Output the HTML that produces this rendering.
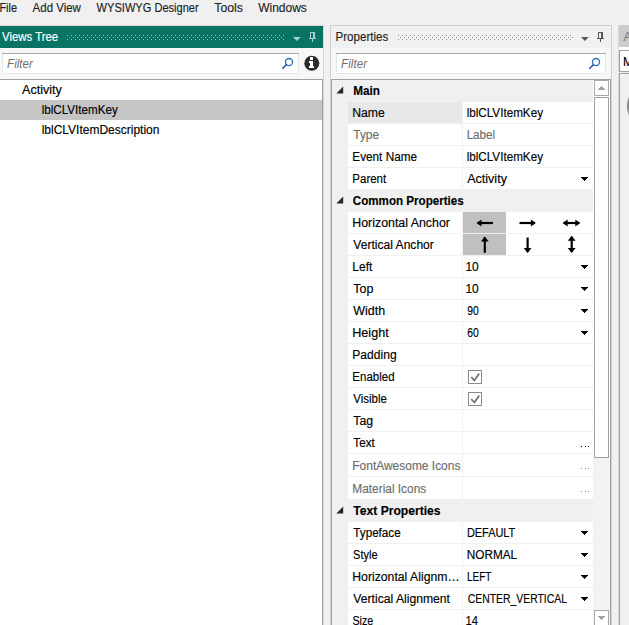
<!DOCTYPE html>
<html><head><meta charset="utf-8"><style>
html,body{margin:0;padding:0;width:629px;height:625px;overflow:hidden;background:#f0f0f0}
svg{display:block}
text{font-family:"Liberation Sans",sans-serif;font-size:12px;stroke:currentColor;stroke-width:0.15px}
</style></head><body>
<svg width="629" height="625" viewBox="0 0 629 625" shape-rendering="crispEdges">
<rect x="0" y="0" width="629" height="625" fill="#f0f0f0"/>
<rect x="0" y="0" width="629" height="26" fill="#f0f0f0"/>
<rect x="0" y="25" width="324" height="600" fill="#d6d6d6"/>
<rect x="0" y="26" width="323" height="22" fill="#0a7464"/>
<path d="M69 35h1v1h-1zM73 35h1v1h-1zM77 35h1v1h-1zM81 35h1v1h-1zM85 35h1v1h-1zM89 35h1v1h-1zM93 35h1v1h-1zM97 35h1v1h-1zM101 35h1v1h-1zM105 35h1v1h-1zM109 35h1v1h-1zM113 35h1v1h-1zM117 35h1v1h-1zM121 35h1v1h-1zM125 35h1v1h-1zM129 35h1v1h-1zM133 35h1v1h-1zM137 35h1v1h-1zM141 35h1v1h-1zM145 35h1v1h-1zM149 35h1v1h-1zM153 35h1v1h-1zM157 35h1v1h-1zM161 35h1v1h-1zM165 35h1v1h-1zM169 35h1v1h-1zM173 35h1v1h-1zM177 35h1v1h-1zM181 35h1v1h-1zM185 35h1v1h-1zM189 35h1v1h-1zM193 35h1v1h-1zM197 35h1v1h-1zM201 35h1v1h-1zM205 35h1v1h-1zM209 35h1v1h-1zM213 35h1v1h-1zM217 35h1v1h-1zM221 35h1v1h-1zM225 35h1v1h-1zM229 35h1v1h-1zM233 35h1v1h-1zM237 35h1v1h-1zM241 35h1v1h-1zM245 35h1v1h-1zM249 35h1v1h-1zM253 35h1v1h-1zM257 35h1v1h-1zM261 35h1v1h-1zM265 35h1v1h-1zM269 35h1v1h-1zM273 35h1v1h-1zM277 35h1v1h-1zM281 35h1v1h-1zM285 35h1v1h-1zM67 37h1v1h-1zM71 37h1v1h-1zM75 37h1v1h-1zM79 37h1v1h-1zM83 37h1v1h-1zM87 37h1v1h-1zM91 37h1v1h-1zM95 37h1v1h-1zM99 37h1v1h-1zM103 37h1v1h-1zM107 37h1v1h-1zM111 37h1v1h-1zM115 37h1v1h-1zM119 37h1v1h-1zM123 37h1v1h-1zM127 37h1v1h-1zM131 37h1v1h-1zM135 37h1v1h-1zM139 37h1v1h-1zM143 37h1v1h-1zM147 37h1v1h-1zM151 37h1v1h-1zM155 37h1v1h-1zM159 37h1v1h-1zM163 37h1v1h-1zM167 37h1v1h-1zM171 37h1v1h-1zM175 37h1v1h-1zM179 37h1v1h-1zM183 37h1v1h-1zM187 37h1v1h-1zM191 37h1v1h-1zM195 37h1v1h-1zM199 37h1v1h-1zM203 37h1v1h-1zM207 37h1v1h-1zM211 37h1v1h-1zM215 37h1v1h-1zM219 37h1v1h-1zM223 37h1v1h-1zM227 37h1v1h-1zM231 37h1v1h-1zM235 37h1v1h-1zM239 37h1v1h-1zM243 37h1v1h-1zM247 37h1v1h-1zM251 37h1v1h-1zM255 37h1v1h-1zM259 37h1v1h-1zM263 37h1v1h-1zM267 37h1v1h-1zM271 37h1v1h-1zM275 37h1v1h-1zM279 37h1v1h-1zM283 37h1v1h-1zM69 39h1v1h-1zM73 39h1v1h-1zM77 39h1v1h-1zM81 39h1v1h-1zM85 39h1v1h-1zM89 39h1v1h-1zM93 39h1v1h-1zM97 39h1v1h-1zM101 39h1v1h-1zM105 39h1v1h-1zM109 39h1v1h-1zM113 39h1v1h-1zM117 39h1v1h-1zM121 39h1v1h-1zM125 39h1v1h-1zM129 39h1v1h-1zM133 39h1v1h-1zM137 39h1v1h-1zM141 39h1v1h-1zM145 39h1v1h-1zM149 39h1v1h-1zM153 39h1v1h-1zM157 39h1v1h-1zM161 39h1v1h-1zM165 39h1v1h-1zM169 39h1v1h-1zM173 39h1v1h-1zM177 39h1v1h-1zM181 39h1v1h-1zM185 39h1v1h-1zM189 39h1v1h-1zM193 39h1v1h-1zM197 39h1v1h-1zM201 39h1v1h-1zM205 39h1v1h-1zM209 39h1v1h-1zM213 39h1v1h-1zM217 39h1v1h-1zM221 39h1v1h-1zM225 39h1v1h-1zM229 39h1v1h-1zM233 39h1v1h-1zM237 39h1v1h-1zM241 39h1v1h-1zM245 39h1v1h-1zM249 39h1v1h-1zM253 39h1v1h-1zM257 39h1v1h-1zM261 39h1v1h-1zM265 39h1v1h-1zM269 39h1v1h-1zM273 39h1v1h-1zM277 39h1v1h-1zM281 39h1v1h-1zM285 39h1v1h-1z" fill="#076555"/>
<path d="M67 35h1v1h-1zM71 35h1v1h-1zM75 35h1v1h-1zM79 35h1v1h-1zM83 35h1v1h-1zM87 35h1v1h-1zM91 35h1v1h-1zM95 35h1v1h-1zM99 35h1v1h-1zM103 35h1v1h-1zM107 35h1v1h-1zM111 35h1v1h-1zM115 35h1v1h-1zM119 35h1v1h-1zM123 35h1v1h-1zM127 35h1v1h-1zM131 35h1v1h-1zM135 35h1v1h-1zM139 35h1v1h-1zM143 35h1v1h-1zM147 35h1v1h-1zM151 35h1v1h-1zM155 35h1v1h-1zM159 35h1v1h-1zM163 35h1v1h-1zM167 35h1v1h-1zM171 35h1v1h-1zM175 35h1v1h-1zM179 35h1v1h-1zM183 35h1v1h-1zM187 35h1v1h-1zM191 35h1v1h-1zM195 35h1v1h-1zM199 35h1v1h-1zM203 35h1v1h-1zM207 35h1v1h-1zM211 35h1v1h-1zM215 35h1v1h-1zM219 35h1v1h-1zM223 35h1v1h-1zM227 35h1v1h-1zM231 35h1v1h-1zM235 35h1v1h-1zM239 35h1v1h-1zM243 35h1v1h-1zM247 35h1v1h-1zM251 35h1v1h-1zM255 35h1v1h-1zM259 35h1v1h-1zM263 35h1v1h-1zM267 35h1v1h-1zM271 35h1v1h-1zM275 35h1v1h-1zM279 35h1v1h-1zM283 35h1v1h-1zM69 37h1v1h-1zM73 37h1v1h-1zM77 37h1v1h-1zM81 37h1v1h-1zM85 37h1v1h-1zM89 37h1v1h-1zM93 37h1v1h-1zM97 37h1v1h-1zM101 37h1v1h-1zM105 37h1v1h-1zM109 37h1v1h-1zM113 37h1v1h-1zM117 37h1v1h-1zM121 37h1v1h-1zM125 37h1v1h-1zM129 37h1v1h-1zM133 37h1v1h-1zM137 37h1v1h-1zM141 37h1v1h-1zM145 37h1v1h-1zM149 37h1v1h-1zM153 37h1v1h-1zM157 37h1v1h-1zM161 37h1v1h-1zM165 37h1v1h-1zM169 37h1v1h-1zM173 37h1v1h-1zM177 37h1v1h-1zM181 37h1v1h-1zM185 37h1v1h-1zM189 37h1v1h-1zM193 37h1v1h-1zM197 37h1v1h-1zM201 37h1v1h-1zM205 37h1v1h-1zM209 37h1v1h-1zM213 37h1v1h-1zM217 37h1v1h-1zM221 37h1v1h-1zM225 37h1v1h-1zM229 37h1v1h-1zM233 37h1v1h-1zM237 37h1v1h-1zM241 37h1v1h-1zM245 37h1v1h-1zM249 37h1v1h-1zM253 37h1v1h-1zM257 37h1v1h-1zM261 37h1v1h-1zM265 37h1v1h-1zM269 37h1v1h-1zM273 37h1v1h-1zM277 37h1v1h-1zM281 37h1v1h-1zM67 39h1v1h-1zM71 39h1v1h-1zM75 39h1v1h-1zM79 39h1v1h-1zM83 39h1v1h-1zM87 39h1v1h-1zM91 39h1v1h-1zM95 39h1v1h-1zM99 39h1v1h-1zM103 39h1v1h-1zM107 39h1v1h-1zM111 39h1v1h-1zM115 39h1v1h-1zM119 39h1v1h-1zM123 39h1v1h-1zM127 39h1v1h-1zM131 39h1v1h-1zM135 39h1v1h-1zM139 39h1v1h-1zM143 39h1v1h-1zM147 39h1v1h-1zM151 39h1v1h-1zM155 39h1v1h-1zM159 39h1v1h-1zM163 39h1v1h-1zM167 39h1v1h-1zM171 39h1v1h-1zM175 39h1v1h-1zM179 39h1v1h-1zM183 39h1v1h-1zM187 39h1v1h-1zM191 39h1v1h-1zM195 39h1v1h-1zM199 39h1v1h-1zM203 39h1v1h-1zM207 39h1v1h-1zM211 39h1v1h-1zM215 39h1v1h-1zM219 39h1v1h-1zM223 39h1v1h-1zM227 39h1v1h-1zM231 39h1v1h-1zM235 39h1v1h-1zM239 39h1v1h-1zM243 39h1v1h-1zM247 39h1v1h-1zM251 39h1v1h-1zM255 39h1v1h-1zM259 39h1v1h-1zM263 39h1v1h-1zM267 39h1v1h-1zM271 39h1v1h-1zM275 39h1v1h-1zM279 39h1v1h-1zM283 39h1v1h-1z" fill="#8cc4ba"/>
<path d="M293 37h7.8l-3.9 3.9z" fill="#a3d2ca" shape-rendering="geometricPrecision"/>
<path d="M310 32h5v6h1v1h-3v3h-1v-3h-3v-1h1zM311 33v5h2v-5z" fill="#a3d2ca" fill-rule="evenodd"/>
<rect x="0" y="48" width="323" height="31" fill="#f7f7f7"/>
<rect x="2" y="53" width="297" height="21" fill="#ffffff"/>
<rect x="2" y="53" width="297" height="1" fill="#a9a9a9"/>
<rect x="2" y="54" width="1" height="20" fill="#e2e8ef"/>
<rect x="298" y="54" width="1" height="20" fill="#e2e8ef"/>
<rect x="2" y="73" width="297" height="1" fill="#e2e8ef"/>
<g shape-rendering="geometricPrecision"><circle cx="289" cy="62" r="3.55" fill="none" stroke="#2e6fc0" stroke-width="1.35"/>
<path d="M286.3 64.7L282.8 68.2" stroke="#21509c" stroke-width="1.6" stroke-linecap="round"/></g>
<circle cx="311.8" cy="63.2" r="7.5" fill="#2b2b2b" shape-rendering="geometricPrecision"/>
<path d="M310 57h3v3h-3z M309 61h4v5h1v2h-5v-2h1v-3h-1z" fill="#ffffff"/>
<rect x="0" y="79" width="323" height="546" fill="#ffffff"/>
<rect x="0" y="79" width="323" height="1" fill="#a0a0a0"/>
<rect x="322" y="79" width="1" height="546" fill="#a0a0a0"/>
<rect x="0" y="100" width="322" height="20" fill="#c5c5c5"/>
<rect x="330" y="25" width="282" height="600" fill="#d0d0d0"/>
<rect x="331" y="26" width="280" height="22" fill="#f1f1f1"/>
<rect x="331" y="48" width="280" height="31" fill="#f7f7f7"/>
<path d="M400 35h1v1h-1zM404 35h1v1h-1zM408 35h1v1h-1zM412 35h1v1h-1zM416 35h1v1h-1zM420 35h1v1h-1zM424 35h1v1h-1zM428 35h1v1h-1zM432 35h1v1h-1zM436 35h1v1h-1zM440 35h1v1h-1zM444 35h1v1h-1zM448 35h1v1h-1zM452 35h1v1h-1zM456 35h1v1h-1zM460 35h1v1h-1zM464 35h1v1h-1zM468 35h1v1h-1zM472 35h1v1h-1zM476 35h1v1h-1zM480 35h1v1h-1zM484 35h1v1h-1zM488 35h1v1h-1zM492 35h1v1h-1zM496 35h1v1h-1zM500 35h1v1h-1zM504 35h1v1h-1zM508 35h1v1h-1zM512 35h1v1h-1zM516 35h1v1h-1zM520 35h1v1h-1zM524 35h1v1h-1zM528 35h1v1h-1zM532 35h1v1h-1zM536 35h1v1h-1zM540 35h1v1h-1zM544 35h1v1h-1zM548 35h1v1h-1zM552 35h1v1h-1zM556 35h1v1h-1zM560 35h1v1h-1zM564 35h1v1h-1zM568 35h1v1h-1zM572 35h1v1h-1zM398 37h1v1h-1zM402 37h1v1h-1zM406 37h1v1h-1zM410 37h1v1h-1zM414 37h1v1h-1zM418 37h1v1h-1zM422 37h1v1h-1zM426 37h1v1h-1zM430 37h1v1h-1zM434 37h1v1h-1zM438 37h1v1h-1zM442 37h1v1h-1zM446 37h1v1h-1zM450 37h1v1h-1zM454 37h1v1h-1zM458 37h1v1h-1zM462 37h1v1h-1zM466 37h1v1h-1zM470 37h1v1h-1zM474 37h1v1h-1zM478 37h1v1h-1zM482 37h1v1h-1zM486 37h1v1h-1zM490 37h1v1h-1zM494 37h1v1h-1zM498 37h1v1h-1zM502 37h1v1h-1zM506 37h1v1h-1zM510 37h1v1h-1zM514 37h1v1h-1zM518 37h1v1h-1zM522 37h1v1h-1zM526 37h1v1h-1zM530 37h1v1h-1zM534 37h1v1h-1zM538 37h1v1h-1zM542 37h1v1h-1zM546 37h1v1h-1zM550 37h1v1h-1zM554 37h1v1h-1zM558 37h1v1h-1zM562 37h1v1h-1zM566 37h1v1h-1zM570 37h1v1h-1zM574 37h1v1h-1zM400 39h1v1h-1zM404 39h1v1h-1zM408 39h1v1h-1zM412 39h1v1h-1zM416 39h1v1h-1zM420 39h1v1h-1zM424 39h1v1h-1zM428 39h1v1h-1zM432 39h1v1h-1zM436 39h1v1h-1zM440 39h1v1h-1zM444 39h1v1h-1zM448 39h1v1h-1zM452 39h1v1h-1zM456 39h1v1h-1zM460 39h1v1h-1zM464 39h1v1h-1zM468 39h1v1h-1zM472 39h1v1h-1zM476 39h1v1h-1zM480 39h1v1h-1zM484 39h1v1h-1zM488 39h1v1h-1zM492 39h1v1h-1zM496 39h1v1h-1zM500 39h1v1h-1zM504 39h1v1h-1zM508 39h1v1h-1zM512 39h1v1h-1zM516 39h1v1h-1zM520 39h1v1h-1zM524 39h1v1h-1zM528 39h1v1h-1zM532 39h1v1h-1zM536 39h1v1h-1zM540 39h1v1h-1zM544 39h1v1h-1zM548 39h1v1h-1zM552 39h1v1h-1zM556 39h1v1h-1zM560 39h1v1h-1zM564 39h1v1h-1zM568 39h1v1h-1zM572 39h1v1h-1z" fill="#ffffff"/>
<path d="M398 35h1v1h-1zM402 35h1v1h-1zM406 35h1v1h-1zM410 35h1v1h-1zM414 35h1v1h-1zM418 35h1v1h-1zM422 35h1v1h-1zM426 35h1v1h-1zM430 35h1v1h-1zM434 35h1v1h-1zM438 35h1v1h-1zM442 35h1v1h-1zM446 35h1v1h-1zM450 35h1v1h-1zM454 35h1v1h-1zM458 35h1v1h-1zM462 35h1v1h-1zM466 35h1v1h-1zM470 35h1v1h-1zM474 35h1v1h-1zM478 35h1v1h-1zM482 35h1v1h-1zM486 35h1v1h-1zM490 35h1v1h-1zM494 35h1v1h-1zM498 35h1v1h-1zM502 35h1v1h-1zM506 35h1v1h-1zM510 35h1v1h-1zM514 35h1v1h-1zM518 35h1v1h-1zM522 35h1v1h-1zM526 35h1v1h-1zM530 35h1v1h-1zM534 35h1v1h-1zM538 35h1v1h-1zM542 35h1v1h-1zM546 35h1v1h-1zM550 35h1v1h-1zM554 35h1v1h-1zM558 35h1v1h-1zM562 35h1v1h-1zM566 35h1v1h-1zM570 35h1v1h-1zM400 37h1v1h-1zM404 37h1v1h-1zM408 37h1v1h-1zM412 37h1v1h-1zM416 37h1v1h-1zM420 37h1v1h-1zM424 37h1v1h-1zM428 37h1v1h-1zM432 37h1v1h-1zM436 37h1v1h-1zM440 37h1v1h-1zM444 37h1v1h-1zM448 37h1v1h-1zM452 37h1v1h-1zM456 37h1v1h-1zM460 37h1v1h-1zM464 37h1v1h-1zM468 37h1v1h-1zM472 37h1v1h-1zM476 37h1v1h-1zM480 37h1v1h-1zM484 37h1v1h-1zM488 37h1v1h-1zM492 37h1v1h-1zM496 37h1v1h-1zM500 37h1v1h-1zM504 37h1v1h-1zM508 37h1v1h-1zM512 37h1v1h-1zM516 37h1v1h-1zM520 37h1v1h-1zM524 37h1v1h-1zM528 37h1v1h-1zM532 37h1v1h-1zM536 37h1v1h-1zM540 37h1v1h-1zM544 37h1v1h-1zM548 37h1v1h-1zM552 37h1v1h-1zM556 37h1v1h-1zM560 37h1v1h-1zM564 37h1v1h-1zM568 37h1v1h-1zM572 37h1v1h-1zM398 39h1v1h-1zM402 39h1v1h-1zM406 39h1v1h-1zM410 39h1v1h-1zM414 39h1v1h-1zM418 39h1v1h-1zM422 39h1v1h-1zM426 39h1v1h-1zM430 39h1v1h-1zM434 39h1v1h-1zM438 39h1v1h-1zM442 39h1v1h-1zM446 39h1v1h-1zM450 39h1v1h-1zM454 39h1v1h-1zM458 39h1v1h-1zM462 39h1v1h-1zM466 39h1v1h-1zM470 39h1v1h-1zM474 39h1v1h-1zM478 39h1v1h-1zM482 39h1v1h-1zM486 39h1v1h-1zM490 39h1v1h-1zM494 39h1v1h-1zM498 39h1v1h-1zM502 39h1v1h-1zM506 39h1v1h-1zM510 39h1v1h-1zM514 39h1v1h-1zM518 39h1v1h-1zM522 39h1v1h-1zM526 39h1v1h-1zM530 39h1v1h-1zM534 39h1v1h-1zM538 39h1v1h-1zM542 39h1v1h-1zM546 39h1v1h-1zM550 39h1v1h-1zM554 39h1v1h-1zM558 39h1v1h-1zM562 39h1v1h-1zM566 39h1v1h-1zM570 39h1v1h-1z" fill="#8f8f8f"/>
<path d="M581 37h7.8l-3.9 3.9z" fill="#5a5a5a" shape-rendering="geometricPrecision"/>
<path d="M598 32h5v6h1v1h-3v3h-1v-3h-3v-1h1zM599 33v5h2v-5z" fill="#555555" fill-rule="evenodd"/>
<rect x="336" y="53" width="270" height="21" fill="#ffffff"/>
<rect x="336" y="53" width="270" height="1" fill="#a9a9a9"/>
<rect x="336" y="54" width="1" height="20" fill="#e2e8ef"/>
<rect x="605" y="54" width="1" height="20" fill="#e2e8ef"/>
<rect x="336" y="73" width="270" height="1" fill="#e2e8ef"/>
<g shape-rendering="geometricPrecision"><circle cx="596" cy="62" r="3.55" fill="none" stroke="#2e6fc0" stroke-width="1.35"/>
<path d="M593.3 64.7L589.8 68.2" stroke="#21509c" stroke-width="1.6" stroke-linecap="round"/></g>
<rect x="331" y="79" width="280" height="546" fill="#a0a0a0"/>
<rect x="332" y="80" width="278" height="545" fill="#ffffff"/>
<rect x="332" y="80" width="16" height="545" fill="#f0f0f0"/>
<rect x="332" y="80" width="261" height="22" fill="#f0f0f0"/>
<rect x="462" y="102" width="1" height="21" fill="#f0f0f0"/>
<rect x="348" y="123" width="245" height="1" fill="#f0f0f0"/>
<rect x="462" y="124" width="1" height="21" fill="#f0f0f0"/>
<rect x="348" y="145" width="245" height="1" fill="#f0f0f0"/>
<rect x="462" y="146" width="1" height="21" fill="#f0f0f0"/>
<rect x="348" y="167" width="245" height="1" fill="#f0f0f0"/>
<rect x="462" y="168" width="1" height="21" fill="#f0f0f0"/>
<rect x="332" y="189" width="261" height="23" fill="#f0f0f0"/>
<rect x="462" y="212" width="1" height="21" fill="#f0f0f0"/>
<rect x="348" y="233" width="245" height="1" fill="#f0f0f0"/>
<rect x="462" y="234" width="1" height="21" fill="#f0f0f0"/>
<rect x="348" y="255" width="245" height="1" fill="#f0f0f0"/>
<rect x="462" y="256" width="1" height="21" fill="#f0f0f0"/>
<rect x="348" y="277" width="245" height="1" fill="#f0f0f0"/>
<rect x="462" y="278" width="1" height="21" fill="#f0f0f0"/>
<rect x="348" y="299" width="245" height="1" fill="#f0f0f0"/>
<rect x="462" y="300" width="1" height="21" fill="#f0f0f0"/>
<rect x="348" y="321" width="245" height="1" fill="#f0f0f0"/>
<rect x="462" y="322" width="1" height="21" fill="#f0f0f0"/>
<rect x="348" y="343" width="245" height="1" fill="#f0f0f0"/>
<rect x="462" y="344" width="1" height="21" fill="#f0f0f0"/>
<rect x="348" y="365" width="245" height="1" fill="#f0f0f0"/>
<rect x="462" y="366" width="1" height="21" fill="#f0f0f0"/>
<rect x="348" y="387" width="245" height="1" fill="#f0f0f0"/>
<rect x="462" y="388" width="1" height="21" fill="#f0f0f0"/>
<rect x="348" y="409" width="245" height="1" fill="#f0f0f0"/>
<rect x="462" y="410" width="1" height="21" fill="#f0f0f0"/>
<rect x="348" y="431" width="245" height="1" fill="#f0f0f0"/>
<rect x="462" y="432" width="1" height="21" fill="#f0f0f0"/>
<rect x="348" y="453" width="245" height="1" fill="#f0f0f0"/>
<rect x="462" y="454" width="1" height="22" fill="#f0f0f0"/>
<rect x="348" y="476" width="245" height="1" fill="#f0f0f0"/>
<rect x="462" y="477" width="1" height="22" fill="#f0f0f0"/>
<rect x="332" y="499" width="261" height="23" fill="#f0f0f0"/>
<rect x="462" y="522" width="1" height="21" fill="#f0f0f0"/>
<rect x="348" y="543" width="245" height="1" fill="#f0f0f0"/>
<rect x="462" y="544" width="1" height="21" fill="#f0f0f0"/>
<rect x="348" y="565" width="245" height="1" fill="#f0f0f0"/>
<rect x="462" y="566" width="1" height="21" fill="#f0f0f0"/>
<rect x="348" y="587" width="245" height="1" fill="#f0f0f0"/>
<rect x="462" y="588" width="1" height="21" fill="#f0f0f0"/>
<rect x="348" y="609" width="245" height="1" fill="#f0f0f0"/>
<rect x="462" y="610" width="1" height="21" fill="#f0f0f0"/>
<rect x="348" y="631" width="245" height="1" fill="#f0f0f0"/>
<rect x="348" y="102" width="114" height="21" fill="#e8e8e8"/>
<rect x="463" y="212" width="43" height="21" fill="#c0c0c0"/>
<rect x="463" y="234" width="43" height="21" fill="#c0c0c0"/>
<path d="M343.2 86.6v6.8h-6.8z" fill="#262626" shape-rendering="geometricPrecision"/>
<path d="M343.2 196.6v6.8h-6.8z" fill="#262626" shape-rendering="geometricPrecision"/>
<path d="M343.2 506.6v6.8h-6.8z" fill="#262626" shape-rendering="geometricPrecision"/>
<path d="M581 177h7l-3.5 4z" fill="#000"/>
<path d="M581 265h7l-3.5 4z" fill="#000"/>
<path d="M581 287h7l-3.5 4z" fill="#000"/>
<path d="M581 309h7l-3.5 4z" fill="#000"/>
<path d="M581 331h7l-3.5 4z" fill="#000"/>
<path d="M581 531h7l-3.5 4z" fill="#000"/>
<path d="M581 553h7l-3.5 4z" fill="#000"/>
<path d="M581 575h7l-3.5 4z" fill="#000"/>
<path d="M581 597h7l-3.5 4z" fill="#000"/>
<rect x="581" y="446" width="1" height="1" fill="#000"/>
<rect x="585" y="446" width="1" height="1" fill="#000"/>
<rect x="588" y="446" width="1" height="1" fill="#000"/>
<rect x="581" y="468" width="1" height="1" fill="#8a8a8a"/>
<rect x="585" y="468" width="1" height="1" fill="#8a8a8a"/>
<rect x="588" y="468" width="1" height="1" fill="#8a8a8a"/>
<rect x="581" y="491" width="1" height="1" fill="#8a8a8a"/>
<rect x="585" y="491" width="1" height="1" fill="#8a8a8a"/>
<rect x="588" y="491" width="1" height="1" fill="#8a8a8a"/>
<rect x="468.5" y="370.5" width="13" height="13" fill="#fff" stroke="#8a8a8a" stroke-width="1"/>
<path d="M471.3 377.2L474.4 380.5L479.2 373.4" fill="none" stroke="#6e6e6e" stroke-width="1.7" shape-rendering="geometricPrecision"/>
<rect x="468.5" y="392.5" width="13" height="13" fill="#fff" stroke="#8a8a8a" stroke-width="1"/>
<path d="M471.3 399.2L474.4 402.5L479.2 395.4" fill="none" stroke="#6e6e6e" stroke-width="1.7" shape-rendering="geometricPrecision"/>
<g shape-rendering="geometricPrecision"><path d="M477.5 223H493" stroke="#000" stroke-width="2.2"/>
<path d="M476.5 223l5 -3.6v7.2z" fill="#000"/>
</g>
<g shape-rendering="geometricPrecision"><path d="M519.5 223H534.8" stroke="#000" stroke-width="2.2"/>
<path d="M535.8 223l-5 -3.6v7.2z" fill="#000"/>
</g>
<g shape-rendering="geometricPrecision"><path d="M563.6 223H579.3" stroke="#000" stroke-width="2.2"/>
<path d="M562.6 223l5 -3.6v7.2z" fill="#000"/>
<path d="M580.3 223l-5 -3.6v7.2z" fill="#000"/>
</g>
<g shape-rendering="geometricPrecision"><path d="M484.8 237.5V252.8" stroke="#000" stroke-width="2.2"/>
<path d="M484.8 236.5l-3.9 5h7.8z" fill="#000"/>
</g>
<g shape-rendering="geometricPrecision"><path d="M527.6 237.5V252" stroke="#000" stroke-width="2.2"/>
<path d="M527.6 253l-3.9 -5h7.8z" fill="#000"/>
</g>
<g shape-rendering="geometricPrecision"><path d="M571.7 236.8V252" stroke="#000" stroke-width="2.2"/>
<path d="M571.7 235.8l-3.9 5h7.8z" fill="#000"/>
<path d="M571.7 253l-3.9 -5h7.8z" fill="#000"/>
</g>
<rect x="593" y="80" width="17" height="545" fill="#ffffff"/>
<rect x="593" y="458" width="17" height="167" fill="#f2f2f2"/>
<rect x="594.5" y="80.5" width="14" height="15" fill="#fff" stroke="#a8a8a8"/>
<path d="M598 90h7l-3.5 -4z" fill="#a0a0a0"/>
<rect x="594.5" y="97.5" width="14" height="360" fill="#fff" stroke="#a0a0a0"/>
<rect x="594.5" y="610.5" width="14" height="20" fill="#fff" stroke="#a8a8a8"/>
<path d="M598 616h7l-3.5 4z" fill="#a0a0a0"/>
<rect x="618" y="25" width="11" height="600" fill="#f0f0f0"/>
<rect x="618" y="25" width="1" height="600" fill="#d9d9d9"/>
<rect x="619" y="25" width="10" height="22" fill="#cccccc"/>
<rect x="619" y="47" width="10" height="3" fill="#ffffff"/>
<rect x="619" y="50" width="10" height="22" fill="#a0a0a0"/>
<rect x="620" y="51" width="9" height="20" fill="#ffffff"/>
<rect x="619" y="73" width="10" height="552" fill="#a0a0a0"/>
<rect x="620" y="74" width="9" height="551" fill="#f0f0f0"/>
<circle cx="649" cy="106" r="21" fill="none" stroke="#8c8c8c" stroke-width="2.2" shape-rendering="geometricPrecision"/>
<text x="623.6" y="41" font-family="Liberation Sans" font-size="12" fill="#808080" color="#808080">A</text>
<text x="623" y="66" font-family="Liberation Sans" font-size="12" fill="#000">M</text>
<text x="-0.61" y="12" textLength="17.62" lengthAdjust="spacingAndGlyphs" font-weight="normal" font-style="normal" fill="#1e1e1e" color="#1e1e1e">File</text>
<text x="32.60" y="12" textLength="48.31" lengthAdjust="spacingAndGlyphs" font-weight="normal" font-style="normal" fill="#1e1e1e" color="#1e1e1e">Add View</text>
<text x="96.60" y="12" textLength="102.13" lengthAdjust="spacingAndGlyphs" font-weight="normal" font-style="normal" fill="#1e1e1e" color="#1e1e1e">WYSIWYG Designer</text>
<text x="214.30" y="12" textLength="28.52" lengthAdjust="spacingAndGlyphs" font-weight="normal" font-style="normal" fill="#1e1e1e" color="#1e1e1e">Tools</text>
<text x="258.20" y="12" textLength="48.69" lengthAdjust="spacingAndGlyphs" font-weight="normal" font-style="normal" fill="#1e1e1e" color="#1e1e1e">Windows</text>
<text x="2.00" y="41" textLength="56.13" lengthAdjust="spacingAndGlyphs" font-weight="normal" font-style="normal" fill="#ffffff" color="#ffffff">Views Tree</text>
<text x="335.54" y="41" textLength="52.78" lengthAdjust="spacingAndGlyphs" font-weight="normal" font-style="normal" fill="#1e1e1e" color="#1e1e1e">Properties</text>
<text x="7.00" y="68" textLength="25.98" lengthAdjust="spacingAndGlyphs" font-weight="normal" font-style="italic" fill="#707070" color="#707070" style="stroke-width:0">Filter</text>
<text x="341.10" y="68" textLength="25.98" lengthAdjust="spacingAndGlyphs" font-weight="normal" font-style="italic" fill="#707070" color="#707070" style="stroke-width:0">Filter</text>
<text x="22.00" y="94" textLength="39.82" lengthAdjust="spacingAndGlyphs" font-weight="normal" font-style="normal" fill="#000000" color="#000000">Activity</text>
<text x="41.73" y="114" textLength="76.07" lengthAdjust="spacingAndGlyphs" font-weight="normal" font-style="normal" fill="#000000" color="#000000">lblCLVItemKey</text>
<text x="41.70" y="134" textLength="117.73" lengthAdjust="spacingAndGlyphs" font-weight="normal" font-style="normal" fill="#000000" color="#000000">lblCLVItemDescription</text>
<text x="353.30" y="95" textLength="26.63" lengthAdjust="spacingAndGlyphs" font-weight="bold" font-style="normal" fill="#000000" color="#000000">Main</text>
<text x="352.28" y="117" textLength="32.53" lengthAdjust="spacingAndGlyphs" font-weight="normal" font-style="normal" fill="#000000" color="#000000">Name</text>
<text x="353.30" y="139" textLength="25.72" lengthAdjust="spacingAndGlyphs" font-weight="normal" font-style="normal" fill="#6d6d6d" color="#6d6d6d">Type</text>
<text x="352.32" y="161" textLength="64.71" lengthAdjust="spacingAndGlyphs" font-weight="normal" font-style="normal" fill="#000000" color="#000000">Event Name</text>
<text x="352.34" y="183" textLength="33.84" lengthAdjust="spacingAndGlyphs" font-weight="normal" font-style="normal" fill="#000000" color="#000000">Parent</text>
<text x="352.80" y="205" textLength="110.90" lengthAdjust="spacingAndGlyphs" font-weight="bold" font-style="normal" fill="#000000" color="#000000">Common Properties</text>
<text x="352.27" y="227" textLength="97.64" lengthAdjust="spacingAndGlyphs" font-weight="normal" font-style="normal" fill="#000000" color="#000000">Horizontal Anchor</text>
<text x="353.30" y="249" textLength="80.55" lengthAdjust="spacingAndGlyphs" font-weight="normal" font-style="normal" fill="#000000" color="#000000">Vertical Anchor</text>
<text x="352.29" y="271" textLength="20.12" lengthAdjust="spacingAndGlyphs" font-weight="normal" font-style="normal" fill="#000000" color="#000000">Left</text>
<text x="353.30" y="293" textLength="20.07" lengthAdjust="spacingAndGlyphs" font-weight="normal" font-style="normal" fill="#000000" color="#000000">Top</text>
<text x="353.30" y="315" textLength="31.91" lengthAdjust="spacingAndGlyphs" font-weight="normal" font-style="normal" fill="#000000" color="#000000">Width</text>
<text x="352.25" y="337" textLength="36.42" lengthAdjust="spacingAndGlyphs" font-weight="normal" font-style="normal" fill="#000000" color="#000000">Height</text>
<text x="352.29" y="359" textLength="44.35" lengthAdjust="spacingAndGlyphs" font-weight="normal" font-style="normal" fill="#000000" color="#000000">Padding</text>
<text x="352.34" y="381" textLength="42.20" lengthAdjust="spacingAndGlyphs" font-weight="normal" font-style="normal" fill="#000000" color="#000000">Enabled</text>
<text x="353.30" y="403" textLength="33.53" lengthAdjust="spacingAndGlyphs" font-weight="normal" font-style="normal" fill="#000000" color="#000000">Visible</text>
<text x="353.30" y="425" textLength="19.87" lengthAdjust="spacingAndGlyphs" font-weight="normal" font-style="normal" fill="#000000" color="#000000">Tag</text>
<text x="353.30" y="447" textLength="21.52" lengthAdjust="spacingAndGlyphs" font-weight="normal" font-style="normal" fill="#000000" color="#000000">Text</text>
<text x="352.30" y="470" textLength="108.09" lengthAdjust="spacingAndGlyphs" font-weight="normal" font-style="normal" fill="#6d6d6d" color="#6d6d6d">FontAwesome Icons</text>
<text x="352.31" y="493" textLength="73.90" lengthAdjust="spacingAndGlyphs" font-weight="normal" font-style="normal" fill="#6d6d6d" color="#6d6d6d">Material Icons</text>
<text x="353.30" y="515" textLength="87.19" lengthAdjust="spacingAndGlyphs" font-weight="bold" font-style="normal" fill="#000000" color="#000000">Text Properties</text>
<text x="353.30" y="537" textLength="47.41" lengthAdjust="spacingAndGlyphs" font-weight="normal" font-style="normal" fill="#000000" color="#000000">Typeface</text>
<text x="353.08" y="559" textLength="24.43" lengthAdjust="spacingAndGlyphs" font-weight="normal" font-style="normal" fill="#000000" color="#000000">Style</text>
<text x="352.28" y="581" textLength="107.42" lengthAdjust="spacingAndGlyphs" font-weight="normal" font-style="normal" fill="#000000" color="#000000">Horizontal Alignm…</text>
<text x="353.30" y="603" textLength="96.68" lengthAdjust="spacingAndGlyphs" font-weight="normal" font-style="normal" fill="#000000" color="#000000">Vertical Alignment</text>
<text x="352.40" y="625" textLength="20.90" lengthAdjust="spacingAndGlyphs" font-weight="normal" font-style="normal" fill="#000000" color="#000000">Size</text>
<text x="466.63" y="117" textLength="76.37" lengthAdjust="spacingAndGlyphs" font-weight="normal" font-style="normal" fill="#000000" color="#000000">lblCLVItemKey</text>
<text x="466.63" y="139" textLength="28.43" lengthAdjust="spacingAndGlyphs" font-weight="normal" font-style="normal" fill="#6d6d6d" color="#6d6d6d">Label</text>
<text x="466.63" y="161" textLength="76.37" lengthAdjust="spacingAndGlyphs" font-weight="normal" font-style="normal" fill="#000000" color="#000000">lblCLVItemKey</text>
<text x="467.20" y="183" textLength="39.72" lengthAdjust="spacingAndGlyphs" font-weight="normal" font-style="normal" fill="#000000" color="#000000">Activity</text>
<text x="465.51" y="271" textLength="13.25" lengthAdjust="spacingAndGlyphs" font-weight="normal" font-style="normal" fill="#000000" color="#000000">10</text>
<text x="465.51" y="293" textLength="13.25" lengthAdjust="spacingAndGlyphs" font-weight="normal" font-style="normal" fill="#000000" color="#000000">10</text>
<text x="467.20" y="315" textLength="11.51" lengthAdjust="spacingAndGlyphs" font-weight="normal" font-style="normal" fill="#000000" color="#000000">90</text>
<text x="467.20" y="337" textLength="11.51" lengthAdjust="spacingAndGlyphs" font-weight="normal" font-style="normal" fill="#000000" color="#000000">60</text>
<text x="466.89" y="537" textLength="48.43" lengthAdjust="spacingAndGlyphs" font-weight="normal" font-style="normal" fill="#000000" color="#000000">DEFAULT</text>
<text x="466.82" y="559" textLength="50.32" lengthAdjust="spacingAndGlyphs" font-weight="normal" font-style="normal" fill="#000000" color="#000000">NORMAL</text>
<text x="466.96" y="581" textLength="24.52" lengthAdjust="spacingAndGlyphs" font-weight="normal" font-style="normal" fill="#000000" color="#000000">LEFT</text>
<text x="467.80" y="603" textLength="99.12" lengthAdjust="spacingAndGlyphs" font-weight="normal" font-style="normal" fill="#000000" color="#000000">CENTER_VERTICAL</text>
<text x="465.56" y="625" textLength="12.58" lengthAdjust="spacingAndGlyphs" font-weight="normal" font-style="normal" fill="#000000" color="#000000">14</text>
</svg></body></html>
